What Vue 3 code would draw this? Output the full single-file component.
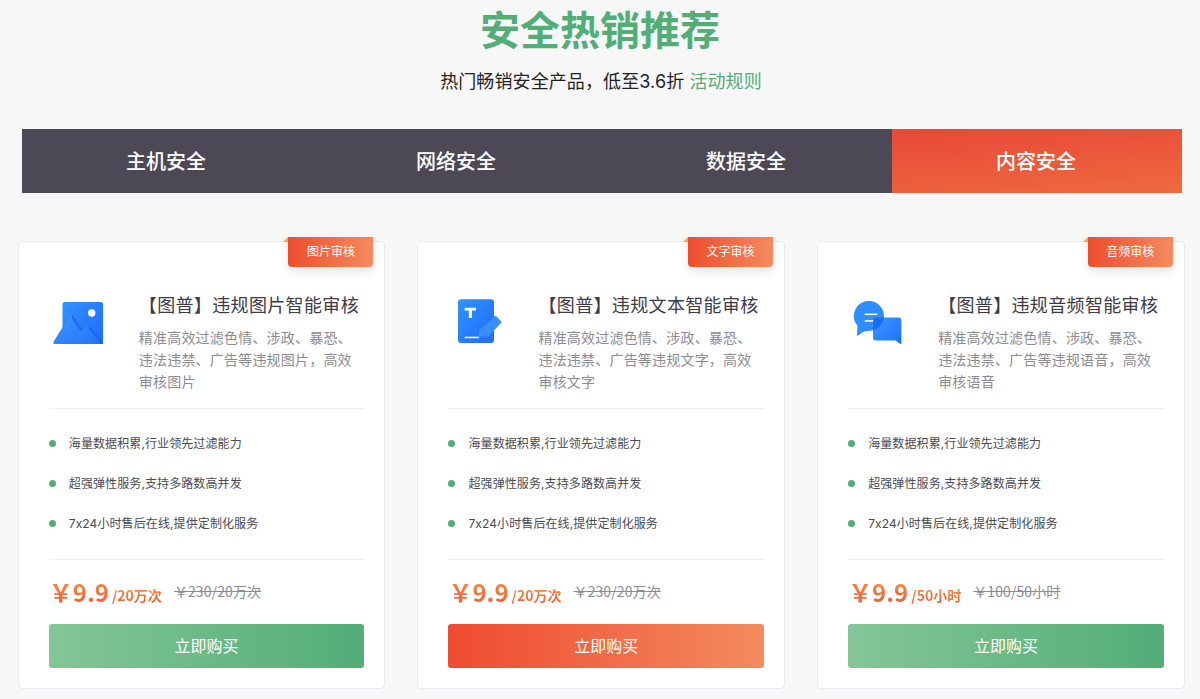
<script setup>
const tabs = ['主机安全', '网络安全', '数据安全', '内容安全']
const features = ['海量数据积累,行业领先过滤能力', '超强弹性服务,支持多路数高并发', '7x24小时售后在线,提供定制化服务']
const cards = [
  { tag: '图片审核', icon: 'image', title: '【图普】违规图片智能审核', desc: '精准高效过滤色情、涉政、暴恐、违法违禁、广告等违规图片，高效审核图片', unit: '/20万次', old: '￥230/20万次', btn: 'green' },
  { tag: '文字审核', icon: 'text', title: '【图普】违规文本智能审核', desc: '精准高效过滤色情、涉政、暴恐、违法违禁、广告等违规文字，高效审核文字', unit: '/20万次', old: '￥230/20万次', btn: 'orange' },
  { tag: '音频审核', icon: 'chat', title: '【图普】违规音频智能审核', desc: '精准高效过滤色情、涉政、暴恐、违法违禁、广告等违规语音，高效审核语音', unit: '/50小时', old: '￥100/50小时', btn: 'green' },
]
</script>

<template>
  <div class="page">
    <h1 class="title">安全热销推荐</h1>
    <p class="sub">热门畅销安全产品，低至3.6折 <a class="rule">活动规则</a></p>
    <div class="tabs">
      <div v-for="(t, i) in tabs" :key="t" class="tab" :class="{ active: i === 3 }">{{ t }}</div>
    </div>
    <div class="cards">
      <div v-for="c in cards" :key="c.tag" class="card">
        <div class="badge"><i class="fold"></i>{{ c.tag }}</div>
        <div class="head">
          <div class="icon">
            <svg v-if="c.icon === 'image'" width="60" height="60" viewBox="49 293 60 60">
              <defs>
                <linearGradient id="imgA" x1="0" y1="0" x2="1" y2="1"><stop offset="0" stop-color="#3093ff"/><stop offset="1" stop-color="#1f6bfa"/></linearGradient>
                <linearGradient id="imgB" x1="0" y1="0" x2="1" y2="1"><stop offset="0" stop-color="#3c98ff"/><stop offset="1" stop-color="#2272fb"/></linearGradient>
              </defs>
              <rect x="62.5" y="302" width="40.5" height="42" rx="2.2" fill="url(#imgA)"/>
              <path d="M72 315 L83 331 L90 327 L103 341 V344 H70 Z" fill="#1f66ee"/>
              <path d="M70 315 L80.5 331 L87.5 326.5 L100.5 344 H55 Q52.6 344 53.6 341.8 Z" fill="url(#imgB)"/>
              <circle cx="91.7" cy="313" r="3.7" fill="#fff"/>
            </svg>
            <svg v-else-if="c.icon === 'text'" width="60" height="60" viewBox="449 293 60 60">
              <defs>
                <linearGradient id="txtA" x1="0" y1="0" x2="1" y2="1"><stop offset="0" stop-color="#3093ff"/><stop offset="1" stop-color="#1f6bfa"/></linearGradient>
              </defs>
              <rect x="459" y="299.3" width="36" height="43.7" rx="3" fill="url(#txtA)"/>
              <path d="M496.6 315.6 L502.8 322 L489.5 336.5 H480 V330.5 Z" fill="#3a8dfc"/>
              <path d="M465.7 307.7 H477 V310.4 H472.9 V318 H469.8 V310.4 H465.7 Z" fill="#fff"/>
              <rect x="465.7" y="336.7" width="14.3" height="1.5" fill="#fff"/>
            </svg>
            <svg v-else width="60" height="60" viewBox="849 293 60 60">
              <defs>
                <linearGradient id="chatA" x1="0" y1="0" x2="1" y2="1"><stop offset="0" stop-color="#3a9aff"/><stop offset="1" stop-color="#1f6ffb"/></linearGradient>
              </defs>
              <path d="M877 317.5 H900 Q902.4 317.5 902.4 320 V343 Q902.4 344.6 901 343.8 L896.5 340.5 H877 Q874 340.5 874 337.5 V320 Q874 317.5 877 317.5 Z" fill="url(#chatA)"/>
              <path d="M870 301 A15 15 0 1 1 870 331 Q866 331 864 332 L859 335.5 Q858 336 858 335 L858.5 325.8 A15 15 0 0 1 870 301 Z" fill="#2f8dff"/>
              <path d="M884.9 317.5 H877 Q874 317.5 874 320.5 V330.5 A15 15 0 0 0 884.9 317.5 Z" fill="#1f6cf4"/>
              <rect x="865.7" y="313.6" width="12.6" height="1.5" fill="#fff"/>
              <rect x="865.7" y="320.2" width="8.6" height="1.5" fill="#fff"/>
            </svg>
          </div>
          <div class="info">
            <div class="name">{{ c.title }}</div>
            <p class="desc">{{ c.desc }}</p>
          </div>
        </div>
        <ul class="list">
          <li v-for="f in features" :key="f">{{ f }}</li>
        </ul>
        <div class="price">
          <span class="now">￥9.9</span>
          <span class="unit">{{ c.unit }}</span>
          <s class="old">{{ c.old }}</s>
        </div>
        <button class="buy" :class="c.btn">立即购买</button>
      </div>
    </div>
  </div>
</template>

<style scoped>
.page {
  width: 1200px;
  height: 699px;
  overflow: hidden;
  background: #f7f7f8;
  font-family: Inter, "Noto Sans CJK SC", sans-serif;
}
.title {
  margin: 0;
  height: 62px;
  line-height: 62px;
  font-size: 40px;
  font-weight: 700;
  text-align: center;
  color: #52ad77;
}
.sub {
  margin: 7px 0 0;
  height: 26px;
  padding-left: 2px;
  line-height: 26px;
  font-size: 18px;
  letter-spacing: 0.1px;
  text-align: center;
  color: #1f1f24;
}
.rule { color: #52ad77; }
.tabs {
  display: flex;
  width: 1160px;
  height: 64px;
  margin: 34px 0 0 22px;
}
.tab {
  flex: 1;
  line-height: 66px;
  padding-right: 2px;
  text-align: center;
  font-size: 20px;
  font-weight: 500;
  color: #fff;
  background: #4d4856;
}
.tab.active { background: linear-gradient(175deg, #e8483a, #ee6a3e); }
.cards {
  display: grid;
  grid-template-columns: repeat(3, 1fr);
  gap: 32px;
  width: 1167px;
  margin: 48px 0 0 17.8px;
}
.card {
  position: relative;
  box-sizing: border-box;
  height: 448px;
  padding: 0 20px 0 30px;
  background: #fff;
  border: 1px solid #e8e8f5;
  border-radius: 5px;
}
.badge {
  position: absolute;
  top: -5px;
  right: 11px;
  width: 85px;
  height: 30px;
  line-height: 30px;
  text-align: center;
  font-size: 12px;
  color: #fff;
  background: linear-gradient(90deg, #ee4d2f, #f38b5e);
  border-radius: 0 0 4px 4px;
  box-shadow: 0 4px 10px rgba(60, 50, 60, 0.14);
}
.fold {
  position: absolute;
  top: 0;
  left: -5px;
  width: 0;
  height: 0;
  border-bottom: 5px solid #f6a25f;
  border-left: 5px solid transparent;
}
.head {
  display: flex;
  height: 166px;
  border-bottom: 1px solid #efeff5;
}
.icon {
  flex: none;
  width: 90px;
  padding-top: 51px;
  box-sizing: border-box;
}
.info { flex: 1; padding-top: 50px; min-width: 0; }
.name {
  height: 28px;
  line-height: 28px;
  font-size: 18px;
  letter-spacing: 0.35px;
  color: #3e3b47;
  white-space: nowrap;
}
.desc {
  margin: 7px 0 0;
  font-size: 14px;
  line-height: 22px;
  letter-spacing: 0.2px;
  color: #8c8c92;
}
.list {
  list-style: none;
  margin: 0;
  padding: 14px 0 16px;
  border-bottom: 1px solid #efeff5;
}
.list li {
  position: relative;
  height: 40px;
  line-height: 42px;
  padding-left: 20px;
  font-size: 12px;
  letter-spacing: 0.1px;
  color: #4a4a50;
}
.list li::before {
  content: "";
  position: absolute;
  left: 0;
  top: 17px;
  width: 7px;
  height: 7px;
  border-radius: 50%;
  background: #52ad77;
}
.price {
  display: flex;
  align-items: center;
  height: 64px;
  font-family: "Noto Sans CJK SC", sans-serif;
}
.now {
  font-size: 24px;
  font-weight: 700;
  background: linear-gradient(180deg, #f39347, #ee5a35);
  -webkit-background-clip: text;
  background-clip: text;
  color: transparent;
  line-height: 30px;
}
.unit {
  margin: 6px 0 0 3px;
  font-size: 14px;
  font-weight: 700;
  background: linear-gradient(180deg, #f39347, #ee5a35);
  -webkit-background-clip: text;
  background-clip: text;
  color: transparent;
  line-height: 20px;
}
.old {
  margin: 0 0 2px 12px;
  font-size: 14px;
  letter-spacing: 0.1px;
  color: #8c8c92;
}
.buy {
  display: block;
  width: 100%;
  height: 44px;
  padding: 0 0 3px;
  border: 0;
  border-radius: 3px;
  font-family: inherit;
  font-size: 16px;
  color: #fff;
}
.buy.green { background: linear-gradient(90deg, #84c697, #52ad77); }
.buy.orange { background: linear-gradient(90deg, #ee4b30, #f38b5e); }
</style>
